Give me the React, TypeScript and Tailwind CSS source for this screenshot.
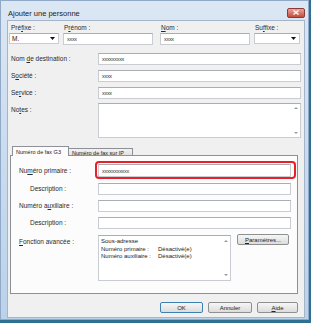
import { ReactNode } from "react";

const font = { fontFamily: '"Liberation Sans", Arial, sans-serif' };

function Field({ value = "", className = "" }: { value?: string; className?: string }) {
  return (
    <div
      className={`h-[12px] bg-white border border-[#c9ccd2] border-t-[#a9adb5] pl-[3px] flex items-center text-[5.5px] tracking-[-0.3px] text-[#333] ${className}`}
    >
      {value}
    </div>
  );
}

function Select({ value = "", className = "" }: { value?: string; className?: string }) {
  return (
    <div
      className={`h-[11px] bg-white border border-[#c9ccd2] border-t-[#a9adb5] pl-[2px] pr-[3px] flex items-center justify-between text-[6.5px] text-[#222] ${className}`}
    >
      <span>{value}</span>
      <svg width="5" height="3" viewBox="0 0 5 3">
        <path d="M0 0h5L2.5 3z" fill="#111" />
      </svg>
    </div>
  );
}

function Label({ children, className = "" }: { children: ReactNode; className?: string }) {
  return <span className={`block text-[6.5px] leading-[8px] text-[#2a2a2a] whitespace-nowrap ${className}`}>{children}</span>;
}

function Row({ label, children, indent = false }: { label: ReactNode; children: ReactNode; indent?: boolean }) {
  return (
    <div className="flex items-center">
      <div className={`w-[87px] shrink-0 ${indent ? "pl-[19px]" : "pl-[8px]"}`}>
        <Label>{label}</Label>
      </div>
      {children}
    </div>
  );
}

function Btn({ children, primary = false, w }: { children: ReactNode; primary?: boolean; w: string }) {
  return (
    <div
      className={`${w} h-[11px] rounded-[2px] border ${
        primary ? "border-[#3c7fb1]" : "border-[#8e8f8f]"
      } bg-gradient-to-b from-[#f6f6f6] to-[#dcdcdc] flex items-center justify-center text-[6px] text-[#222]`}
    >
      {children}
    </div>
  );
}

export default function App() {
  return (
    <div style={font} className="w-[311px] h-[323px] overflow-hidden bg-[#2f6f8f] text-[6.5px] leading-[8px]">
      <div className="w-[309px] h-[320px] flex flex-col bg-gradient-to-b from-[#dce7f4] via-[#c9dbef] to-[#bcd2ea] border border-[#8fa9c6]">
        {/* Title bar */}
        <div className="h-[19px] shrink-0 flex items-center justify-between pt-[6px] pl-[7px] pr-[3px]">
          <span className="text-[7.5px] text-[#1b1b1b]">Ajouter une personne</span>
          <div className="w-[18px] h-[10px] -mt-[2px] rounded-[2px] border border-[#8b3a3a] bg-gradient-to-b from-[#e7a398] to-[#c44c3e] flex items-center justify-center">
            <svg width="6" height="5" viewBox="0 0 6 5">
              <path d="M0.5 0.5l5 4M5.5 0.5l-5 4" stroke="#fff" strokeWidth="1.3" />
            </svg>
          </div>
        </div>

        {/* Client */}
        <div className="ml-[6px] w-[298px] h-[298px] bg-[#f0f0f0] border border-[#a3b5cb] flex flex-col pt-[2px]">
          {/* Name row */}
          <div className="flex pl-[1px]">
            <div className="w-[50px] flex flex-col">
              <Label className="h-[10px] pl-[2px] pt-[1px]">Pré<u>f</u>ixe :</Label>
              <Select value="M." />
            </div>
            <div className="w-[90px] ml-[4px] flex flex-col">
              <Label className="h-[10px] pl-[1px] pt-[1px]">P<u>r</u>énom :</Label>
              <Field value="xxxx" className="h-[11px]" />
            </div>
            <div className="w-[90px] ml-[7px] flex flex-col">
              <Label className="h-[10px] pl-[1px] pt-[1px]"><u>N</u>om :</Label>
              <Field value="xxxx" className="h-[11px]" />
            </div>
            <div className="w-[46px] ml-[4px] flex flex-col">
              <Label className="h-[10px] pl-[1px] pt-[1px]">Su<u>f</u>fixe :</Label>
              <Select />
            </div>
          </div>

          {/* Detail rows */}
          <div className="mt-[8px] flex flex-col gap-[5px]">
            <div className="flex items-center">
              <div className="w-[90px] pl-[3px]">
                <Label>Nom <u>d</u>e destination :</Label>
              </div>
              <Field value="xxxxxxxxx" className="w-[203px]" />
            </div>
            <div className="flex items-center">
              <div className="w-[90px] pl-[3px]">
                <Label>S<u>o</u>ciété :</Label>
              </div>
              <Field value="xxxx" className="w-[203px]" />
            </div>
            <div className="flex items-center">
              <div className="w-[90px] pl-[3px]">
                <Label>Se<u>r</u>vice :</Label>
              </div>
              <Field value="xxxx" className="w-[203px]" />
            </div>
          </div>
          <div className="mt-[4px] flex items-start">
            <div className="w-[90px] pl-[3px] pt-[3px]">
              <Label>No<u>t</u>es :</Label>
            </div>
            <div className="w-[203px] h-[35px] bg-white border border-[#c9ccd2] border-t-[#a9adb5] flex justify-end">
              <div className="w-[9px] flex flex-col items-center justify-between py-[3px]">
                <svg width="4" height="2" viewBox="0 0 4 2">
                  <path d="M0 2h4L2 0z" fill="#999" />
                </svg>
                <svg width="4" height="2" viewBox="0 0 4 2">
                  <path d="M0 0h4L2 2z" fill="#999" />
                </svg>
              </div>
            </div>
          </div>

          {/* Tabs */}
          <div className="mt-[8px] ml-[2px] w-[288px] flex flex-col">
            <div className="h-[10px] flex items-end pl-[2px]">
              <div className="h-[10px] w-[57px] bg-[#fcfcfc] border border-b-0 border-[#8d9096] flex items-center pl-[3px] text-[5.5px] text-[#222] whitespace-nowrap relative z-10">
                Numéro de fax G3
              </div>
              <div className="h-[8px] w-[64px] bg-gradient-to-b from-[#f2f2f2] to-[#e0e0e0] border border-l-0 border-b-0 border-[#8d9096] flex items-center pl-[3px] text-[5.5px] text-[#222] whitespace-nowrap">
                Numéro de fax sur IP
              </div>
            </div>
            <div className="h-[139px] -mt-px bg-[#fcfcfc] border border-[#8d9096] flex flex-col pt-[8px] relative">
              <div className="flex flex-col gap-[5px]">
                <div className="flex items-center mb-[1px]">
                  <div className="w-[87px] shrink-0 pl-[8px]">
                    <Label>Nu<u>m</u>éro primaire :</Label>
                  </div>
                  <Field value="xxxxxxxxxxx" className="w-[193px] h-[13px]" />
                </div>
                <Row label="Description :" indent>
                  <Field className="w-[193px]" />
                </Row>
                <Row label={<>Numéro a<u>u</u>xiliaire :</>}>
                  <Field className="w-[193px]" />
                </Row>
                <Row label="Description :" indent>
                  <Field className="w-[193px]" />
                </Row>
              </div>
              <div className="mt-[6px] flex items-start">
                <div className="w-[87px] shrink-0 pl-[8px] pt-[3px]">
                  <Label><u>F</u>onction avancée :</Label>
                </div>
                <div className="w-[133px] h-[46px] bg-white border border-[#c9ccd2] border-t-[#a9adb5] flex">
                  <div className="flex-1 pl-[2px] pt-[2px] text-[6px] leading-[7.5px] text-[#222] whitespace-nowrap">
                    <div>Sous-adresse</div>
                    <div className="flex">
                      <span className="w-[57px]">Numéro primaire :</span>
                      <span>Désactivé(e)</span>
                    </div>
                    <div className="flex">
                      <span className="w-[57px]">Numéro auxiliaire :</span>
                      <span>Désactivé(e)</span>
                    </div>
                  </div>
                  <div className="w-[8px] flex flex-col items-center justify-between py-[4px]">
                    <svg width="4" height="2" viewBox="0 0 4 2">
                      <path d="M0 2h4L2 0z" fill="#999" />
                    </svg>
                    <svg width="4" height="2" viewBox="0 0 4 2">
                      <path d="M0 0h4L2 2z" fill="#999" />
                    </svg>
                  </div>
                </div>
                <div className="ml-[6px] -mt-px">
                  <Btn w="w-[52px]">
                    <u>P</u>aramètres...
                  </Btn>
                </div>
              </div>

              {/* red highlight */}
              <div className="absolute left-[84px] top-[5px] w-[201px] h-[18px] rounded-[4px] border-[2px] border-[#e8202a]" />
            </div>
          </div>

          {/* Buttons */}
          <div className="mt-[8px] flex justify-end gap-[5px] pr-[6px]">
            <Btn w="w-[43px]" primary>
              OK
            </Btn>
            <Btn w="w-[44px]">Annuler</Btn>
            <Btn w="w-[41px]">
              <u>A</u>ide
            </Btn>
          </div>
        </div>
      </div>
    </div>
  );
}
